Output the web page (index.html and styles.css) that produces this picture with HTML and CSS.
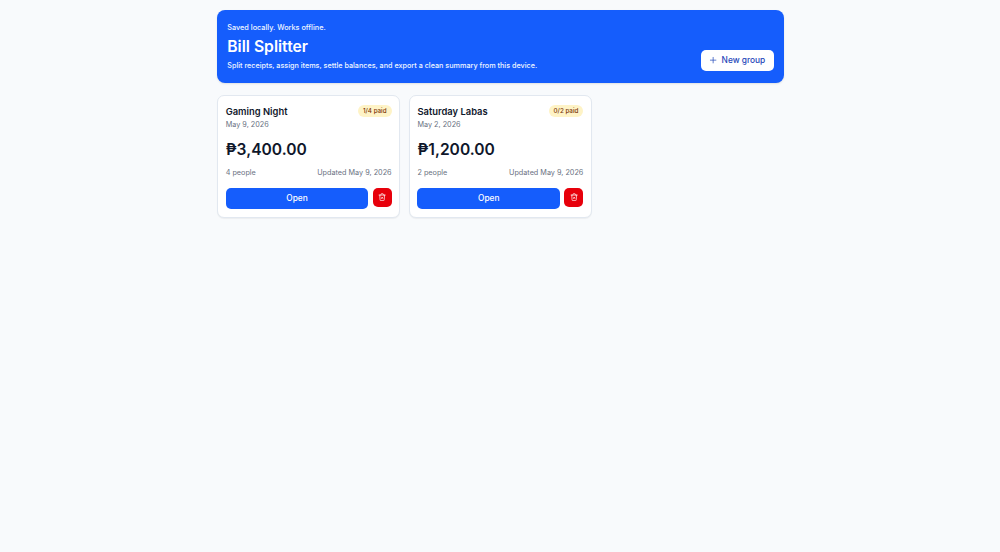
FILE: index.html
```
<!DOCTYPE html>
<html lang="en">
<head>
  <meta charset="UTF-8">
  <title>Bill Splitter</title>
  <link rel="stylesheet" href="styles.css">
</head>
<body>

  <main class="container">
    <header class="hero">
      <div class="hero-text">
        <p class="note">Saved locally. Works offline.</p>
        <h1>Bill Splitter</h1>
        <p class="tagline">Split receipts, assign items, settle balances, and export a clean summary from this device.</p>
      </div>
      <button class="new-group">
        <svg class="icon" viewBox="0 0 24 24"><path d="M4 12h16M12 4v16"/></svg>
        <span>New group</span>
      </button>
    </header>

    <section class="groups">
      <article class="card">
        <div class="card-top">
          <div>
            <h2>Gaming Night</h2>
            <p class="date">May 9, 2026</p>
          </div>
          <span class="badge">1/4 paid</span>
        </div>
        <p class="total">₱3,400.00</p>
        <div class="meta">
          <span>4 people</span>
          <span>Updated May 9, 2026</span>
        </div>
        <div class="actions">
          <button class="open">Open</button>
          <button class="delete" aria-label="Delete group">
            <svg class="icon" viewBox="0 0 24 24"><path d="M3 6h18M5 6l1 14a2 2 0 0 0 2 2h8a2 2 0 0 0 2-2l1-14M8 6l1-3a1 1 0 0 1 1-1h4a1 1 0 0 1 1 1l1 3M10 12l4 4M14 12l-4 4"/></svg>
          </button>
        </div>
      </article>

      <article class="card">
        <div class="card-top">
          <div>
            <h2>Saturday Labas</h2>
            <p class="date">May 2, 2026</p>
          </div>
          <span class="badge">0/2 paid</span>
        </div>
        <p class="total">₱1,200.00</p>
        <div class="meta">
          <span>2 people</span>
          <span>Updated May 9, 2026</span>
        </div>
        <div class="actions">
          <button class="open">Open</button>
          <button class="delete" aria-label="Delete group">
            <svg class="icon" viewBox="0 0 24 24"><path d="M3 6h18M5 6l1 14a2 2 0 0 0 2 2h8a2 2 0 0 0 2-2l1-14M8 6l1-3a1 1 0 0 1 1-1h4a1 1 0 0 1 1 1l1 3M10 12l4 4M14 12l-4 4"/></svg>
          </button>
        </div>
      </article>
    </section>
  </main>

</body>
</html>
```
FILE: styles.css
```
* {
  box-sizing: border-box;
}
body {
  margin: 0;
  padding-left: 0.8px;
  min-height: 100vh;
  background: #f8fafc;
  color: #0f172b;
  font-family: Inter, "Liberation Sans", sans-serif;
  font-size: 7.25px;
}
h1, h2, p {
  margin: 0;
}
button {
  border: none;
  padding: 0;
  font-family: inherit;
  font-size: 8.33px;
  font-weight: 500;
  display: flex;
  align-items: center;
  justify-content: center;
  cursor: pointer;
}
.container {
  width: 567px;
  margin: 0 auto;
  padding-top: 10px;
}
.hero {
  display: flex;
  justify-content: space-between;
  align-items: flex-end;
  height: 73px;
  padding: 12px 10.4px 12.5px;
  background: #155dfc;
  color: white;
  border-radius: 8px;
  box-shadow: 0 1px 2px rgba(0, 0, 0, 0.1);
}
.note, .tagline {
  font-weight: 500;
  line-height: 11px;
  color: #eff6ff;
}
.note {
  font-size: 7.3px;
}
.tagline {
  font-size: 7.22px;
}
.hero h1 {
  margin: 3.5px 0 3px;
  font-size: 15.7px;
  font-weight: 600;
  line-height: 20px;
}
.new-group {
  width: 72.5px;
  height: 21px;
  gap: 4px;
  background: white;
  color: #1d45b8;
  border-radius: 5px;
}
.icon {
  width: 8.3px;
  height: 8.3px;
  fill: none;
  stroke: currentColor;
  stroke-width: 2;
  stroke-linecap: round;
  stroke-linejoin: round;
}
.groups {
  display: grid;
  grid-template-columns: repeat(3, 1fr);
  gap: 8.3px;
  margin-top: 12.4px;
}
.card {
  height: 122.4px;
  padding: 8.6px 7.8px;
  background: white;
  border: 1px solid #e2e8f0;
  border-radius: 7px;
  box-shadow: 0 1px 1px rgba(0, 0, 0, 0.05);
}
.card-top {
  display: flex;
  justify-content: space-between;
  align-items: flex-start;
}
.card h2 {
  font-size: 9.4px;
  font-weight: 600;
  line-height: 13px;
}
.date, .meta {
  color: #6a7282;
  line-height: 11px;
}
.date {
  margin-top: 1px;
}
.badge {
  padding: 0 5px;
  background: #fef3c6;
  color: #7b3306;
  border-radius: 7px;
  font-size: 6.25px;
  font-weight: 500;
  line-height: 12px;
}
.total {
  margin-top: 10px;
  font-size: 15.6px;
  font-weight: 600;
  line-height: 19px;
}
.meta {
  display: flex;
  justify-content: space-between;
  margin-top: 8px;
}
.actions {
  display: flex;
  gap: 4.2px;
  margin-top: 9.8px;
}
.open {
  flex: 1;
  height: 21px;
  background: #155dfc;
  color: white;
  border-radius: 5px;
}
.delete {
  width: 19px;
  height: 19px;
  background: #e7000b;
  color: white;
  border-radius: 5px;
}
```
